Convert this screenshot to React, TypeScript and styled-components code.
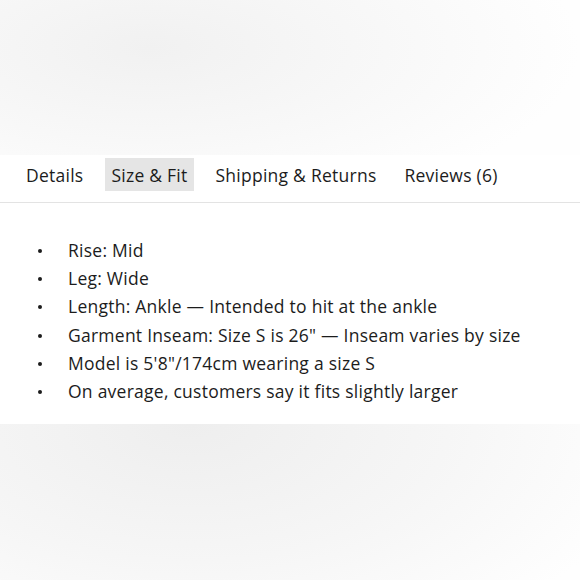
import React from 'react'
import styled, { createGlobalStyle } from 'styled-components'

const GlobalStyle = createGlobalStyle`
  html, body {
    margin: 0;
    padding: 0;
    background: #fff;
  }
  body {
    font-family: 'Open Sans', 'Liberation Sans', sans-serif;
    color: #1c1c1c;
  }
`

const Page = styled.div`
  width: 580px;
  height: 580px;
  display: flex;
  flex-direction: column;
  overflow: hidden;
`
const TopFade = styled.div`
  height: 155px;
  flex-shrink: 0;
  background: radial-gradient(ellipse 430px 170px at 150px 48px, #f1f1f1 0%, #f8f8f8 55%, #fefefe 100%);
`
const BottomFade = styled.div`
  flex: 1;
  background: radial-gradient(ellipse 470px 250px at 190px 0px, #eeeeee 0%, #f6f6f6 55%, #fefefe 100%);
`
const Panel = styled.section`
  background: #fff;
`
const Tabs = styled.nav`
  display: flex;
  align-items: center;
  gap: 16px;
  padding: 3px 0 11px 20px;
  border-bottom: 1px solid #e3e3e3;
`
const Tab = styled.button<{ $active?: boolean }>`
  font: inherit;
  font-size: 17.5px;
  letter-spacing: 0.25px;
  color: #1c1c1c;
  border: 0;
  height: 33px;
  padding: 0 6px;
  background: ${(p) => (p.$active ? '#e5e5e5' : 'transparent')};
  cursor: pointer;
`
const List = styled.ul`
  list-style: none;
  margin: 0;
  padding: 33px 0 19px;
`
const Item = styled.li`
  display: flex;
  align-items: center;
  height: 28.2px;
  font-size: 17.5px;
  letter-spacing: 0.25px;

  &::before {
    content: '';
    width: 4px;
    height: 4px;
    border-radius: 50%;
    background: #1c1c1c;
    margin: 2px 26px 0 38px;
    flex-shrink: 0;
  }
`

const tabs = ['Details', 'Size & Fit', 'Shipping & Returns', 'Reviews (6)']

const specs = [
  'Rise: Mid',
  'Leg: Wide',
  'Length: Ankle — Intended to hit at the ankle',
  'Garment Inseam: Size S is 26" — Inseam varies by size',
  'Model is 5\'8"/174cm wearing a size S',
  'On average, customers say it fits slightly larger',
]

function App() {
  return (
    <Page>
      <GlobalStyle />
      <TopFade />
      <Panel>
        <Tabs>
          {tabs.map((t) => (
            <Tab key={t} $active={t === 'Size & Fit'}>{t}</Tab>
          ))}
        </Tabs>
        <List>
          {specs.map((s) => (
            <Item key={s}>{s}</Item>
          ))}
        </List>
      </Panel>
      <BottomFade />
    </Page>
  )
}

export default App
